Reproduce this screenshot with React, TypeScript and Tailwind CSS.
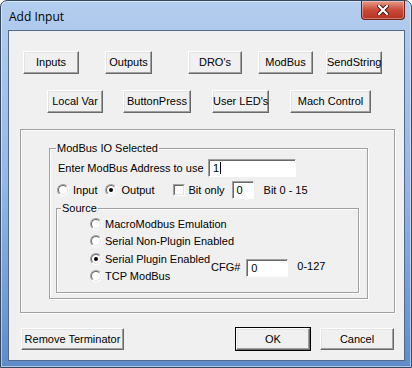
import React from 'react';

const Btn: React.FC<{ label: string; w: string; ml?: string; def?: boolean }> = ({ label, w, ml = '', def }) => (
  <button
    className={`${w} ${ml} h-[23px] shrink-0 px-0 whitespace-nowrap bg-[#f0f0f0] text-[11px] text-black leading-none border border-t-white border-l-white border-r-[#696969] border-b-[#696969] shadow-[inset_-1px_-1px_0_#a0a0a0,inset_1px_1px_0_#e3e3e3] ${def ? 'outline outline-1 outline-black' : ''}`}
  >
    {label}
  </button>
);

const Radio: React.FC<{ checked?: boolean }> = ({ checked }) => (
  <span className="w-[12px] h-[12px] shrink-0 rounded-full border border-t-[#a0a0a0] border-l-[#a0a0a0] border-r-white border-b-white flex">
    <span className="flex-1 rounded-full bg-white border border-t-[#696969] border-l-[#696969] border-r-[#e3e3e3] border-b-[#e3e3e3] flex items-center justify-center">
      {checked && <span className="w-[4px] h-[4px] rounded-full bg-black" />}
    </span>
  </span>
);

const Field: React.FC<{ w: string; value: string; caret?: boolean }> = ({ w, value, caret }) => (
  <span className={`${w} h-[18px] shrink-0 bg-white flex items-center pl-[4px] border border-t-[#a0a0a0] border-l-[#a0a0a0] border-r-white border-b-white shadow-[inset_1px_1px_0_#696969]`}>
    {value}
    {caret && <span className="w-[1px] h-[12px] bg-black ml-[1px]" />}
  </span>
);

const Group = 'border border-[#a0a0a0] shadow-[1px_1px_0_white,inset_1px_1px_0_white]';

export default function App() {
  return (
    <div className="w-[412px] h-[368px] font-['Liberation_Sans',Arial,sans-serif] text-[11px] text-black">
      <div className="w-[412px] h-[368px] flex flex-col rounded-t-[7px] border border-[#34485f] bg-gradient-to-b from-[#b3cdee] via-[#94b7e4] to-[#5f8cc9] shadow-[inset_0_0_0_1px_rgba(255,255,255,0.5)]">
        {/* title bar */}
        <div className="h-[29px] flex items-start shrink-0">
          <span className="pl-[8px] pt-[7px] text-[12px] font-['Open_Sans',sans-serif] text-black">Add Input</span>
          <span className="ml-auto mr-[6px] w-[44px] h-[19px] rounded-b-[4px] border border-t-0 border-[#6e2219] bg-gradient-to-b from-[#e59a8c] via-[#c94a36] to-[#b83222] flex items-center justify-center shadow-[inset_0_0_0_1px_rgba(255,255,255,0.35)]">
            <svg width="12" height="10" viewBox="0 0 12 10">
              <path d="M2 1 L10 9 M10 1 L2 9" stroke="#3a0f0a" strokeWidth="4" strokeLinecap="square" />
              <path d="M2 1 L10 9 M10 1 L2 9" stroke="white" strokeWidth="2.2" strokeLinecap="square" />
            </svg>
          </span>
        </div>

        {/* client area */}
        <div className="ml-[7px] w-[397px] h-[331px] bg-[#f0f0f0] border border-[#52698a] flex flex-col">
          <div className="flex mt-[20px] pl-[14px]">
            <Btn label="Inputs" w="w-[56px]" />
            <Btn label="Outputs" w="w-[47px]" ml="ml-[26px]" />
            <Btn label="DRO's" w="w-[54px]" ml="ml-[36px]" />
            <Btn label="ModBus" w="w-[55px]" ml="ml-[16px]" />
            <Btn label="SendString" w="w-[56px]" ml="ml-[13px]" />
          </div>
          <div className="flex mt-[16px] pl-[38px]">
            <Btn label="Local Var" w="w-[56px]" />
            <Btn label="ButtonPress" w="w-[68px]" ml="ml-[20px]" />
            <Btn label="User LED's" w="w-[57px]" ml="ml-[21px]" />
            <Btn label="Mach Control" w="w-[81px]" ml="ml-[21px]" />
          </div>

          <div className={`mt-[16px] ml-[11px] w-[375px] h-[184px] ${Group}`}>
            <fieldset className={`mt-[12px] ml-[28px] w-[319px] h-[157px] pl-[8px] ${Group}`}>
              <legend className="ml-[-2px] px-[1px] leading-[13px]">ModBus IO Selected</legend>
              <div className="flex items-center h-[18px] mt-[4px]">
                <span>Enter ModBus Address to use</span>
                <span className="ml-auto mr-[71px]">
                  <Field w="w-[88px]" value="1" caret />
                </span>
              </div>
              <div className="flex items-center h-[18px] mt-[4px] ml-[-1px]">
                <Radio />
                <span className="ml-[4px]">Input</span>
                <span className="ml-[8px]"><Radio checked /></span>
                <span className="ml-[4px]">Output</span>
                <span className="ml-[18px] w-[12px] h-[12px] border border-t-[#a0a0a0] border-l-[#a0a0a0] border-r-white border-b-white flex">
                  <span className="flex-1 bg-white border border-t-[#696969] border-l-[#696969] border-r-[#e3e3e3] border-b-[#e3e3e3]" />
                </span>
                <span className="ml-[4px]">Bit only</span>
                <span className="ml-[7px]"><Field w="w-[22px]" value="0" /></span>
                <span className="ml-[10px]">Bit 0 - 15</span>
              </div>
              <fieldset className={`mt-[3px] ml-[-2px] w-[303px] h-[91px] pl-[33px] ${Group}`}>
                <legend className="ml-[-29px] px-[1px] leading-[13px]">Source</legend>
                <div className="flex items-center h-[17.5px]">
                  <Radio /><span className="ml-[3px]">MacroModbus Emulation</span>
                </div>
                <div className="flex items-center h-[17.5px]">
                  <Radio /><span className="ml-[3px]">Serial Non-Plugin Enabled</span>
                </div>
                <div className="flex items-center">
                  <div className="w-[121px] flex flex-col">
                    <div className="flex items-center h-[17.5px]">
                      <Radio checked /><span className="ml-[3px]">Serial Plugin Enabled</span>
                    </div>
                    <div className="flex items-center h-[17.5px]">
                      <Radio /><span className="ml-[3px]">TCP ModBus</span>
                    </div>
                  </div>
                  <span>CFG#</span>
                  <span className="ml-[6px] mt-[1px]"><Field w="w-[42px]" value="0" /></span>
                  <span className="ml-[9px] mt-[-3px]">0-127</span>
                </div>
              </fieldset>
            </fieldset>
          </div>

          <div className="flex mt-[15px] pl-[12px]">
            <Btn label="Remove Terminator" w="w-[103px] !h-[22px]" />
            <Btn label="OK" w="w-[74px] !h-[22px]" ml="ml-[112px]" def />
            <Btn label="Cancel" w="w-[74px] !h-[22px]" ml="ml-[10px]" />
          </div>
        </div>
      </div>
    </div>
  );
}
